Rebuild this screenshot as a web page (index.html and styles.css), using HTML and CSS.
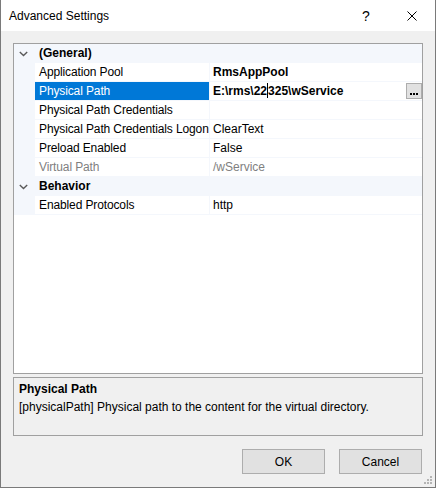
FILE: index.html
```html
<!DOCTYPE html>
<html>
<head>
<meta charset="utf-8">
<link rel="stylesheet" href="styles.css">
</head>
<body>
<div class="window">
  <div class="titlebar">
    <span class="title">Advanced Settings</span>
    <span class="cap-btn help">?</span>
    <span class="cap-btn close">
      <svg width="10" height="10" viewBox="0 0 10 10"><path d="M0.5 0.5 L9.5 9.5 M9.5 0.5 L0.5 9.5" stroke="#000" stroke-width="1" fill="none"/></svg>
    </span>
  </div>
  <div class="content">
    <div class="grid">
      <div class="row cat">
        <span class="gutter"><svg class="chev" width="9" height="6" viewBox="0 0 9 6"><path d="M0.8 1 L4.5 4.6 L8.2 1" stroke="#5a5a5a" stroke-width="1.4" fill="none"/></svg></span>
        <span class="cat-label">(General)</span>
      </div>
      <div class="row prop">
        <span class="gutter"></span>
        <span class="label">Application Pool</span>
        <span class="sep"></span>
        <span class="value bold">RmsAppPool</span>
      </div>
      <div class="row prop">
        <span class="gutter"></span>
        <span class="label selected">Physical Path</span>
        <span class="sep"></span>
        <span class="value bold with-btn"><span>E:\rms\22<span class="caret"></span>325\wService</span><span class="ellipsis"><i></i><i></i><i></i></span></span>
      </div>
      <div class="row prop">
        <span class="gutter"></span>
        <span class="label">Physical Path Credentials</span>
        <span class="sep"></span>
        <span class="value"></span>
      </div>
      <div class="row prop">
        <span class="gutter"></span>
        <span class="label">Physical Path Credentials Logon</span>
        <span class="sep"></span>
        <span class="value">ClearText</span>
      </div>
      <div class="row prop">
        <span class="gutter"></span>
        <span class="label">Preload Enabled</span>
        <span class="sep"></span>
        <span class="value">False</span>
      </div>
      <div class="row prop disabled">
        <span class="gutter"></span>
        <span class="label">Virtual Path</span>
        <span class="sep"></span>
        <span class="value">/wService</span>
      </div>
      <div class="row cat">
        <span class="gutter"><svg class="chev" width="9" height="6" viewBox="0 0 9 6"><path d="M0.8 1 L4.5 4.6 L8.2 1" stroke="#5a5a5a" stroke-width="1.4" fill="none"/></svg></span>
        <span class="cat-label">Behavior</span>
      </div>
      <div class="row prop">
        <span class="gutter"></span>
        <span class="label">Enabled Protocols</span>
        <span class="sep"></span>
        <span class="value">http</span>
      </div>
    </div>
    <div class="desc">
      <div class="desc-title">Physical Path</div>
      <div class="desc-text">[physicalPath] Physical path to the content for the virtual directory.</div>
    </div>
    <div class="buttons">
      <button class="btn">OK</button>
      <button class="btn">Cancel</button>
    </div>
  </div>
  <svg class="grip" width="9" height="9" viewBox="0 0 9 9">
    <rect x="6" y="0" width="2" height="2" fill="#b4b4b4"/>
    <rect x="3" y="3" width="2" height="2" fill="#b4b4b4"/>
    <rect x="6" y="3" width="2" height="2" fill="#b4b4b4"/>
    <rect x="0" y="6" width="2" height="2" fill="#b4b4b4"/>
    <rect x="3" y="6" width="2" height="2" fill="#b4b4b4"/>
    <rect x="6" y="6" width="2" height="2" fill="#b4b4b4"/>
  </svg>
</div>
</body>
</html>
```

FILE: styles.css
```css
* { box-sizing: border-box; }
html, body { margin: 0; padding: 0; }
body {
  font-family: "Liberation Sans", Arial, sans-serif;
  font-size: 12px;
  color: #000;
  background: #f0f0f0;
}
.window {
  position: relative;
  width: 436px;
  height: 488px;
  border-left: 1px solid #7a7a7a;
  border-right: 1px solid #7a7a7a;
  border-bottom: 1px solid #7a7a7a;
  background: #f0f0f0;
  display: flex;
  flex-direction: column;
}
.titlebar {
  height: 31px;
  background: #fff;
  display: flex;
  align-items: center;
  flex-shrink: 0;
}
.title {
  flex: 1;
  padding-left: 8px;
  padding-top: 1px;
  font-size: 12px;
}
.cap-btn {
  width: 46px;
  height: 31px;
  display: flex;
  align-items: center;
  justify-content: center;
}
.help {
  font-size: 14px;
  padding-top: 1px;
}
.close svg { display: block; }
.content {
  flex: 1;
  padding: 12px 12px 0 12px;
  display: flex;
  flex-direction: column;
}
.grid {
  height: 331px;
  border: 1px solid #a0a0a0;
  background: #fff;
  flex-shrink: 0;
}
.row {
  height: 19px;
  display: grid;
  grid-template-columns: 21px 174px 1px 1fr;
  line-height: 17px;
}
.row.cat {
  background: #f4f7fc;
  grid-template-columns: 21px 1fr;
}
.row.prop > .label,
.row.prop > .value {
  border-bottom: 1px solid #f4f7fc;
}
.gutter {
  background: #f4f7fc;
}
.chev {
  display: block;
  margin: 7px 0 0 5px;
}
.cat-label {
  font-weight: bold;
  padding: 1px 0 0 4px;
}
.label {
  padding: 1px 0 0 4px;
  white-space: nowrap;
  overflow: hidden;
  letter-spacing: -0.12px;
}
.label.selected {
  background: #0078d7;
  color: #fff;
}
.sep { background: #f4f7fc; }
.value {
  padding: 1px 0 0 3px;
  white-space: nowrap;
}
.bold { font-weight: bold; }
.disabled .label, .disabled .value { color: #7f7f7f; }
.with-btn {
  display: flex;
  justify-content: space-between;
  align-items: flex-start;
}
.caret {
  display: inline-block;
  width: 1px;
  height: 15px;
  background: #000;
  vertical-align: -3px;
}
.ellipsis {
  width: 16px;
  height: 16px;
  border: 1px solid #adadad;
  background: #e1e1e1;
  display: flex;
  align-items: flex-end;
  justify-content: center;
  gap: 1px;
  padding-bottom: 3px;
}
.ellipsis i {
  display: block;
  width: 2px;
  height: 2px;
  background: #000;
}
.desc {
  margin-top: 3px;
  height: 59px;
  border: 1px solid #a0a0a0;
  background: #f0f0f0;
  padding: 2px 5px 0 5px;
  line-height: 18px;
  flex-shrink: 0;
}
.desc-title { font-weight: bold; }
.buttons {
  margin-top: 13px;
  display: flex;
  justify-content: flex-end;
  gap: 14px;
  padding-right: 1px;
}
.btn {
  width: 83px;
  height: 25px;
  border: 1px solid #adadad;
  background: #e1e1e1;
  font-family: "Liberation Sans", Arial, sans-serif;
  font-size: 12px;
  color: #000;
  padding: 0;
  margin: 0;
}
.grip {
  position: absolute;
  right: 2px;
  bottom: 2px;
}
```
